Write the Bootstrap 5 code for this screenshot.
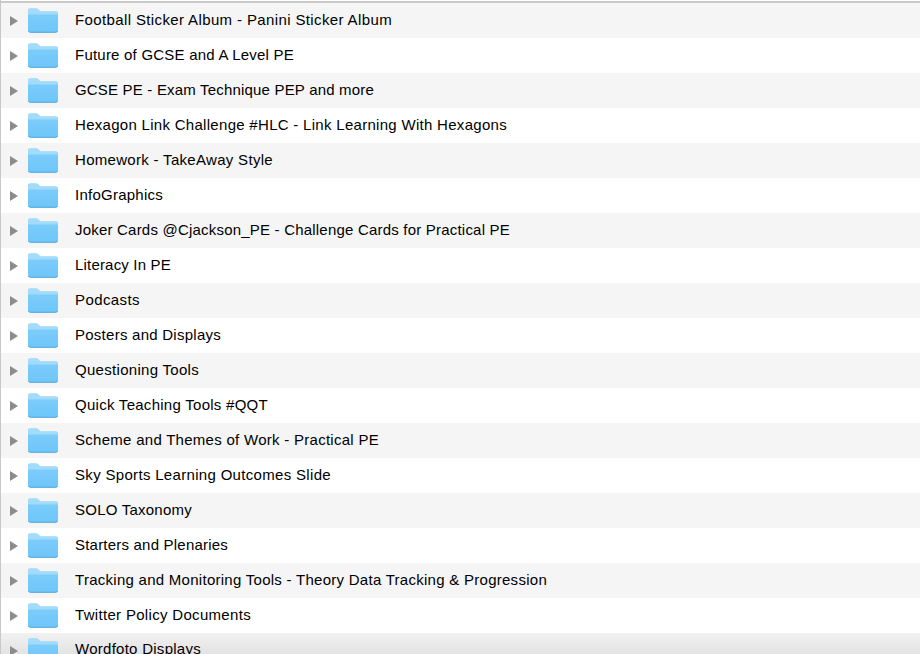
<!DOCTYPE html>
<html lang="en">
<head>
<meta charset="utf-8">
<title>Folders</title>
<link href="https://cdn.jsdelivr.net/npm/bootstrap@5.3.0/dist/css/bootstrap.min.css" rel="stylesheet">
<style>
html,body{height:654px;overflow:hidden;background:#fff}
.finder{height:654px;overflow:hidden;position:relative;border-left:1px solid #c8c8c8;padding-top:3px;font-family:"Liberation Sans",Arial,sans-serif;font-size:15px;color:#000}
.finder::before{content:"";position:absolute;top:1px;left:0;right:0;height:2px;background:#c9c9c9}
.finder-row{height:35px;flex:none}
.finder-row:nth-child(odd){background:#f5f5f5}
.finder-row:nth-child(even){background:#fff}
.finder-row:last-child{height:21px;align-items:flex-start!important;background:linear-gradient(#f1f1f1,#e3e3e3);overflow:hidden}
.finder-row:last-child .tri{margin-top:13px}
.finder-row:last-child .fold{margin-top:5px}
.finder-row:last-child .row-label{margin-top:7px;margin-bottom:0}
.tri{width:0;height:0;border-left:8px solid #8c8c8c;border-top:5px solid transparent;border-bottom:5px solid transparent;margin-left:9px;margin-right:10px;flex:none}
.fold{width:30px;height:25px;margin-right:17px;flex:none;display:block}
.row-label{white-space:nowrap;line-height:18px;margin-bottom:2px}
</style>
</head>
<body>
<div class="finder d-flex flex-column" id="list"></div>
<script src="https://cdn.jsdelivr.net/npm/bootstrap@5.3.0/dist/js/bootstrap.bundle.min.js"></script>
<script>
const rows=[["Football Sticker Album - Panini Sticker Album",317],["Future of GCSE and A Level PE",219],["GCSE PE - Exam Technique PEP and more",299],["Hexagon Link Challenge #HLC - Link Learning With Hexagons",432],["Homework - TakeAway Style",198],["InfoGraphics",88],["Joker Cards @Cjackson_PE - Challenge Cards for Practical PE",435],["Literacy In PE",96],["Podcasts",65],["Posters and Displays",146],["Questioning Tools",124],["Quick Teaching Tools #QQT",193],["Scheme and Themes of Work - Practical PE",304],["Sky Sports Learning Outcomes Slide",256],["SOLO Taxonomy",117],["Starters and Plenaries",153],["Tracking and Monitoring Tools - Theory Data Tracking & Progression",472],["Twitter Policy Documents",176],["Wordfoto Displays",126]];
const svg=`<svg class="fold" viewBox="0 0 30 25"><defs><linearGradient id="fb" x1="0" y1="0" x2="0" y2="1"><stop offset="0" stop-color="#7fcefb"/><stop offset="1" stop-color="#6ec6f9"/></linearGradient></defs><path d="M0 2.500Q0 .5 2 .5H8.500Q10 .5 11 2L12 3.500H28Q30 3.500 30 5.500V22.500Q30 24.500 28 24.500H2Q0 24.500 0 22.500Z" fill="url(#fb)"/><path d="M0 2.500Q0 .5 2 .5H8.500Q10 .5 11 2L12 3.500H28Q30 3.500 30 5.500V6.500H0Z" fill="#a3dcfb"/><path d="M.5 23Q1 24.300 2.500 24.300H27.500Q29 24.300 29.500 23" fill="none" stroke="#5aa6d6" stroke-width="1"/></svg>`;
const list=document.getElementById('list');
rows.forEach(([n,w])=>{
  const r=document.createElement('div');
  r.className='finder-row d-flex align-items-center';
  r.innerHTML=`<span class="tri"></span>${svg}<span class="row-label"></span>`;
  const t=r.lastChild;t.textContent=n;list.appendChild(r);
  t.style.letterSpacing=((w-t.getBoundingClientRect().width)/n.length)+'px';
});
</script>
</body>
</html>
